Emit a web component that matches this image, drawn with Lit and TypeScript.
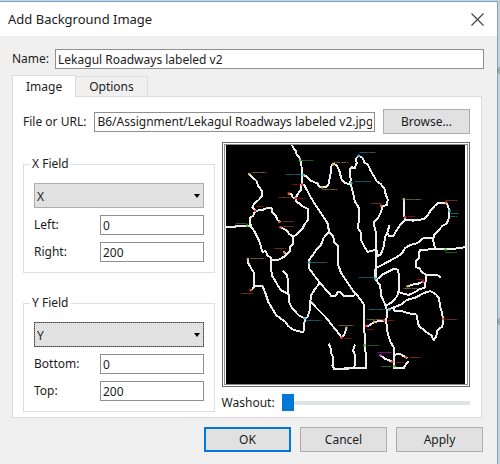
import { LitElement, html, css, svg } from "lit";
import { customElement, property } from "lit/decorators.js";

type Label = [number, number, string, string];

const YELLOW = "#c9b45c";
const RED = "#e8262c";
const ORANGE = "#d85a34";
const CYAN = "#35b9c8";
const GREEN = "#45c42e";
const MAGENTA = "#e030e0";

/* Road lines and place names, on a canvas of 750 x 750 units. */
const ROADS = [
  "M218 13L222 22L229 30L232 42L242 54L246 75L249 100L249 120L246 133L245 148L236 160L229 172L230 184L240 190L252 200L266 206L266 240L256 252L248 268L236 280L222 290",
  "M249 103L260 107L275 121L294 129L300 139L321 140L328 132L334 100L337 76L343 70L353 74L361 92L367 116L378 128L393 131",
  "M393 131L395 120L393 86L399 80L407 84L413 68L411 54L419 46L431 52L437 66L447 72L455 90L467 110L473 122L487 132L497 146L501 162L507 178L505 194L491 198L487 214L480 230L466 246L466 258L472 280L473 320L472 375L471 415",
  "M395 131L403 160L407 182L420 204L420 244L416 262L427 280L427 302L437 322L447 336L466 331L474 332",
  "M252 130L262 148L276 174L292 200L310 226L325 250L330 276L342 290L346 308L357 318L357 375L366 400L382 424L402 454L420 474L434 494L436 520L436 565L440 640L442 650L441 687L376 688",
  "M330 276L313 294L305 316L290 332L270 360L268 384L282 404L302 430L318 448L337 470L351 468L357 456L366 460L374 470L408 468",
  "M302 430L286 450L275 468L273 486L290 504L318 532L340 560L355 578L368 596L376 585L382 567",
  "M273 486L273 508L264 534L256 538L255 556L252 578L240 577L218 570L205 559L198 548L170 528L158 508L146 488L138 464L128 438L116 438L103 442L95 452",
  "M88 100L95 109L110 121L115 137L127 152L128 166L116 180L103 190L98 202L108 212L126 210L148 202L156 204L158 216L168 226L174 240L182 247",
  "M106 213L100 228L91 232L91 250L94 260L105 276L114 294L121 310L128 336L138 334L143 346L154 355L154 390L158 410L167 424L176 440L184 452L206 463",
  "M18 260L46 260L48 257L91 257",
  "M184 262L200 270L209 282L222 290L222 313L213 320L211 334L198 348L180 359L155 362",
  "M190 394L201 404L205 420L207 464L210 490L218 507L238 528L256 537",
  "M84 357L84 368L94 386L104 402L103 438",
  "M206 160L216 162L220 172L229 173",
  "M190 334L199 343",
  "M471 375L468 415L484 438L488 470L498 493L504 510L505 530L502 544L507 584L516 610L526 626L527 688L555 688L563 674L571 668",
  "M556 178L556 225L562 239L578 239L583 242L592 239L616 238L628 226L636 212L651 195L662 187L684 187L690 200L694 216L691 236L686 250L672 258L658 274L647 286L644 300L648 318L652 328L684 329L715 326L742 322",
  "M560 239L544 256L533 272L524 288L511 288L506 278L512 256",
  "M508 278L499 290L495 320L486 344L474 350L475 332",
  "M644 296L616 294L596 310L574 316L560 324L549 342L534 352L508 366L474 384",
  "M652 328L606 330L600 340L602 354L592 364L592 382L602 386L610 396L622 406L623 420L618 446L604 448L590 458L571 466L560 464L548 460L539 458",
  "M472 422L492 404L509 396L525 388L538 390L541 410L541 450L536 470L520 488L503 498",
  "M622 406L646 406L660 408L667 415",
  "M568 440L586 434L600 432L614 426",
  "M503 512L526 504L550 494L564 482L592 474L618 460L636 455L652 464L662 476L665 500L672 524L675 548L672 562L658 572L654 592L646 604L640 590L618 574L601 560L594 526L570 522L552 516L527 514L525 504",
  "M503 543L478 546L464 550L447 561L440 562",
  "M486 650L500 660L524 669",
  "M526 648L542 644L560 654L566 658",
  "M328 614L334 626L336 642L342 656L340 680L346 691L390 689",
  "M408 616L402 634L408 648L408 676L404 689",
];

const LABELS: Label[] = [
  [95, 99, "Ranger stop 1", YELLOW], [247, 60, "Entrance 0", GREEN],
  [199, 105, "General gate 1", CYAN], [218, 134, "Gate 1", RED],
  [340, 67, "Ranger stop 0", YELLOW], [308, 149, "Ranger stop 2", YELLOW],
  [177, 174, "Camping 0", ORANGE], [236, 176, "Gate 2", RED],
  [110, 202, "Gate 0", RED], [48, 251, "Entrance 1", GREEN],
  [187, 247, "Camping 2", ORANGE], [187, 260, "Camping 3", ORANGE],
  [163, 329, "Camping 4", ORANGE], [92, 359, "Ranger stop 4", YELLOW],
  [276, 371, "General gate 4", CYAN], [422, 38, "General gate 0", CYAN],
  [407, 126, "General gate 2", CYAN], [456, 190, "Camping 1", ORANGE],
  [562, 178, "Ranger stop 3", YELLOW], [568, 230, "Gate 3", RED],
  [681, 182, "Camping 8", ORANGE], [696, 222, "General", CYAN],
  [696, 232, "gate 3", CYAN], [681, 340, "Entrance 2", GREEN],
  [63, 465, "Camping 5", ORANGE], [258, 545, "General gate 7", CYAN],
  [358, 559, "Ranger stop 7", YELLOW], [376, 600, "Gate 7", RED],
  [420, 416, "General gate 5", CYAN], [594, 420, "Gate 5", RED],
  [554, 450, "Ranger stop 6", YELLOW], [450, 512, "General gate 6", CYAN],
  [444, 541, "Ranger stop 5", YELLOW], [506, 544, "Gate 6", RED],
  [443, 574, "Gate 8", RED], [446, 622, "Entrance 3", GREEN],
  [682, 541, "Camping 7", ORANGE], [476, 642, "Ranger base", MAGENTA],
  [532, 672, "Gate 8", RED], [572, 656, "Camping 6", ORANGE],
  [488, 684, "Entrance 4", GREEN],
];

const DOTS: [number, number, string][] = [
  [88, 101, YELLOW], [242, 60, GREEN], [252, 104, CYAN], [248, 133, RED],
  [342, 72, YELLOW], [308, 141, YELLOW], [208, 160, ORANGE], [229, 174, RED],
  [106, 212, RED], [82, 257, GREEN], [179, 246, ORANGE], [183, 262, ORANGE],
  [194, 338, ORANGE], [84, 358, YELLOW], [270, 368, CYAN], [419, 46, CYAN],
  [397, 128, CYAN], [487, 197, ORANGE], [556, 177, YELLOW], [560, 231, RED],
  [684, 187, ORANGE], [694, 212, CYAN], [682, 329, GREEN], [93, 452, ORANGE],
  [256, 537, CYAN], [382, 566, YELLOW], [368, 595, RED], [469, 417, CYAN],
  [614, 426, RED], [567, 440, YELLOW], [512, 511, CYAN], [466, 548, YELLOW],
  [496, 543, RED], [442, 560, RED], [437, 619, GREEN], [675, 539, ORANGE],
  [485, 649, MAGENTA], [521, 669, RED], [562, 655, ORANGE], [527, 682, GREEN],
];

@customElement("road-map")
export class RoadMap extends LitElement {
  static styles = css`
    :host { display: block; border: 1px solid #6b6b6b; padding: 1px; background: #fff; }
    .mat { border: 1px solid #8a8a8a; padding: 0 2px 0 1px; background: #fff; }
    .canvas { display: block; width: 100%; background: #000; }
    .road { fill: none; stroke: #ececec; stroke-width: 6; stroke-linejoin: round; shape-rendering: crispEdges; }
    .place { font: 600 7px "Noto Sans", sans-serif; }
  `;
  render() {
    return html`<div class="mat">
      <svg class="canvas" viewBox="18 13 724 723" role="img" aria-label="Lekagul roadways">
        ${ROADS.map((d) => svg`<path class="road" d=${d} />`)}
        ${DOTS.map(([x, y, c]) => svg`<circle cx=${x} cy=${y} r="4" fill=${c} />`)}
        ${LABELS.map(([x, y, t, c]) => svg`<text class="place" x=${x} y=${y} fill=${c}>${t}</text>`)}
      </svg>
    </div>`;
  }
}

const controls = css`
  * { box-sizing: border-box; }
  input, button, select { font: inherit; color: inherit; margin: 0; border-radius: 0; outline: none; }
  .text { height: 20px; min-width: 0; width: 100%; padding: 0 2px; border: 1px solid #8f8f8f; background: #fff; }
`;

@customElement("axis-field")
export class AxisField extends LitElement {
  @property() axis = "X";
  @property() low = "Left";
  @property() high = "Right";
  @property({ type: Boolean }) active = false;

  static styles = [
    controls,
    css`
      :host { display: block; }
      .group { margin: 0; min-width: 0; padding: 10px; border: 1px solid #dfdfdf; }
      .legend { margin-left: -4px; padding: 0 2px; line-height: 18px; }
      .rows { display: grid; grid-template-columns: 59px 1fr; align-items: center; column-gap: 7px; row-gap: 7px; }
      .pick { grid-column: 1 / -1; display: grid; align-items: center; }
      .select { grid-area: 1 / 1; width: 100%; height: 25px; padding: 2px 2px 0; appearance: none; border: 1px solid #adadad; background: #e1e1e1; }
      .select.active { border-color: #8a8a8a; outline: 1px dotted #444; outline-offset: -1px; }
      .arrow { grid-area: 1 / 1; justify-self: end; margin-right: 4px; pointer-events: none; }
    `,
  ];
  render() {
    return html`<fieldset class="group">
      <legend class="legend">${this.axis} Field</legend>
      <div class="rows">
        <div class="pick">
          <select class="select ${this.active ? "active" : ""}" aria-label="${this.axis} Field">
            <option>${this.axis}</option>
          </select>
          <svg class="arrow" width="6" height="4" aria-hidden="true"><path d="M0 0H6L3 4Z" /></svg>
        </div>
        <label for="low">${this.low}:</label>
        <input class="text" id="low" value="0" />
        <label for="high">${this.high}:</label>
        <input class="text" id="high" value="200" />
      </div>
    </fieldset>`;
  }
}

@customElement("app-root")
export class AppRoot extends LitElement {
  static styles = [
    controls,
    css`
      :host {
        display: block; position: relative; min-height: 100vh; box-sizing: border-box;
        padding: 1px 2px 0 0; overflow: hidden; background: #cfcfcf; color: #1c1c1c;
        font: 12px/18px "Noto Sans", "Open Sans", sans-serif;
      }
      .dialog { min-height: calc(100vh - 1px); border: solid #6ea8d8; border-width: 1px 1px 0 0; background: #f0f0f0; }
      .titlebar { display: flex; align-items: center; justify-content: space-between; height: 34px; padding: 0 13px 0 8px; background: #fff; }
      .title { margin: 0; font-size: 13px; font-weight: 400; }
      .close { display: flex; padding: 0; border: 0; background: none; }
      .name { display: flex; align-items: center; gap: 6px; padding: 13px 13px 0 12px; }
      .name label, .file label { flex: none; }
      .tabs { display: flex; align-items: flex-end; height: 21px; margin: 6px 15px 0 12px; }
      .tab { height: 20px; padding: 0 13px; border: 1px solid #dcdcdc; border-width: 1px 1px 0 0; background: #f0f0f0; }
      .tab.current { height: 22px; margin-bottom: -1px; border-left-width: 1px; background: #fff; z-index: 1; }
      .panel { margin: 0 15px 0 12px; padding: 12px 11px 5px 10px; border: 1px solid #dcdcdc; background: #fff; }
      .file { display: flex; align-items: center; gap: 8px; }
      .button { flex: none; width: 87px; height: 25px; padding: 0; border: 1px solid #adadad; background: #e1e1e1; }
      .button.default { border: 2px solid #0078d7; }
      .body { display: grid; grid-template-columns: 192fr 249fr; column-gap: 7px; margin-top: 8px; }
      .axes { display: flex; flex-direction: column; justify-content: space-between; padding-top: 13px; }
      .wash { display: flex; align-items: center; gap: 7px; height: 18px; margin-top: 7px; }
      .range { flex: 1; min-width: 0; height: 18px; appearance: none; background: none; }
      .range::-webkit-slider-runnable-track { height: 4px; background: #e1e4e4; }
      .range::-webkit-slider-thumb { appearance: none; width: 12px; height: 17px; margin-top: -7px; background: #0078d7; }
      .actions { display: flex; justify-content: flex-end; gap: 9px; padding: 9px 14px 8px; }
      .behind { position: absolute; left: 100%; margin-left: -3px; color: #8f8f8f; line-height: 12px; }
      .behind.upper { top: 64px; }
      .behind.lower { top: 315px; }
    `,
  ];
  render() {
    return html`
      <div class="dialog" role="dialog" aria-labelledby="title">
        <header class="titlebar">
          <h1 class="title" id="title">Add Background Image</h1>
          <button class="close" aria-label="Close">
            <svg width="13" height="13" viewBox="0 0 13 13"><path d="M.5.5L12.5 12.5M12.5.5L.5 12.5" fill="none" stroke="#444" stroke-width="1.2" /></svg>
          </button>
        </header>
        <div class="name">
          <label for="name">Name:</label>
          <input class="text" id="name" value="Lekagul Roadways labeled v2" />
        </div>
        <div class="tabs" role="tablist">
          <button class="tab current" role="tab" aria-selected="true">Image</button>
          <button class="tab" role="tab" aria-selected="false">Options</button>
        </div>
        <section class="panel" role="tabpanel">
          <div class="file">
            <label for="file">File or URL:</label>
            <input class="text" id="file" value="B6/Assignment/Lekagul Roadways labeled v2.jpg" />
            <button class="button">Browse...</button>
          </div>
          <div class="body">
            <div class="axes">
              <axis-field axis="X" low="Left" high="Right"></axis-field>
              <axis-field axis="Y" low="Bottom" high="Top" active></axis-field>
            </div>
            <div>
              <road-map></road-map>
              <div class="wash">
                <label for="wash">Washout:</label>
                <input class="range" id="wash" type="range" value="0" />
              </div>
            </div>
          </div>
        </section>
        <footer class="actions">
          <button class="button default">OK</button>
          <button class="button">Cancel</button>
          <button class="button">Apply</button>
        </footer>
      </div>
      <span class="behind upper" aria-hidden="true">e</span>
      <span class="behind lower" aria-hidden="true">e</span>
    `;
  }
}
